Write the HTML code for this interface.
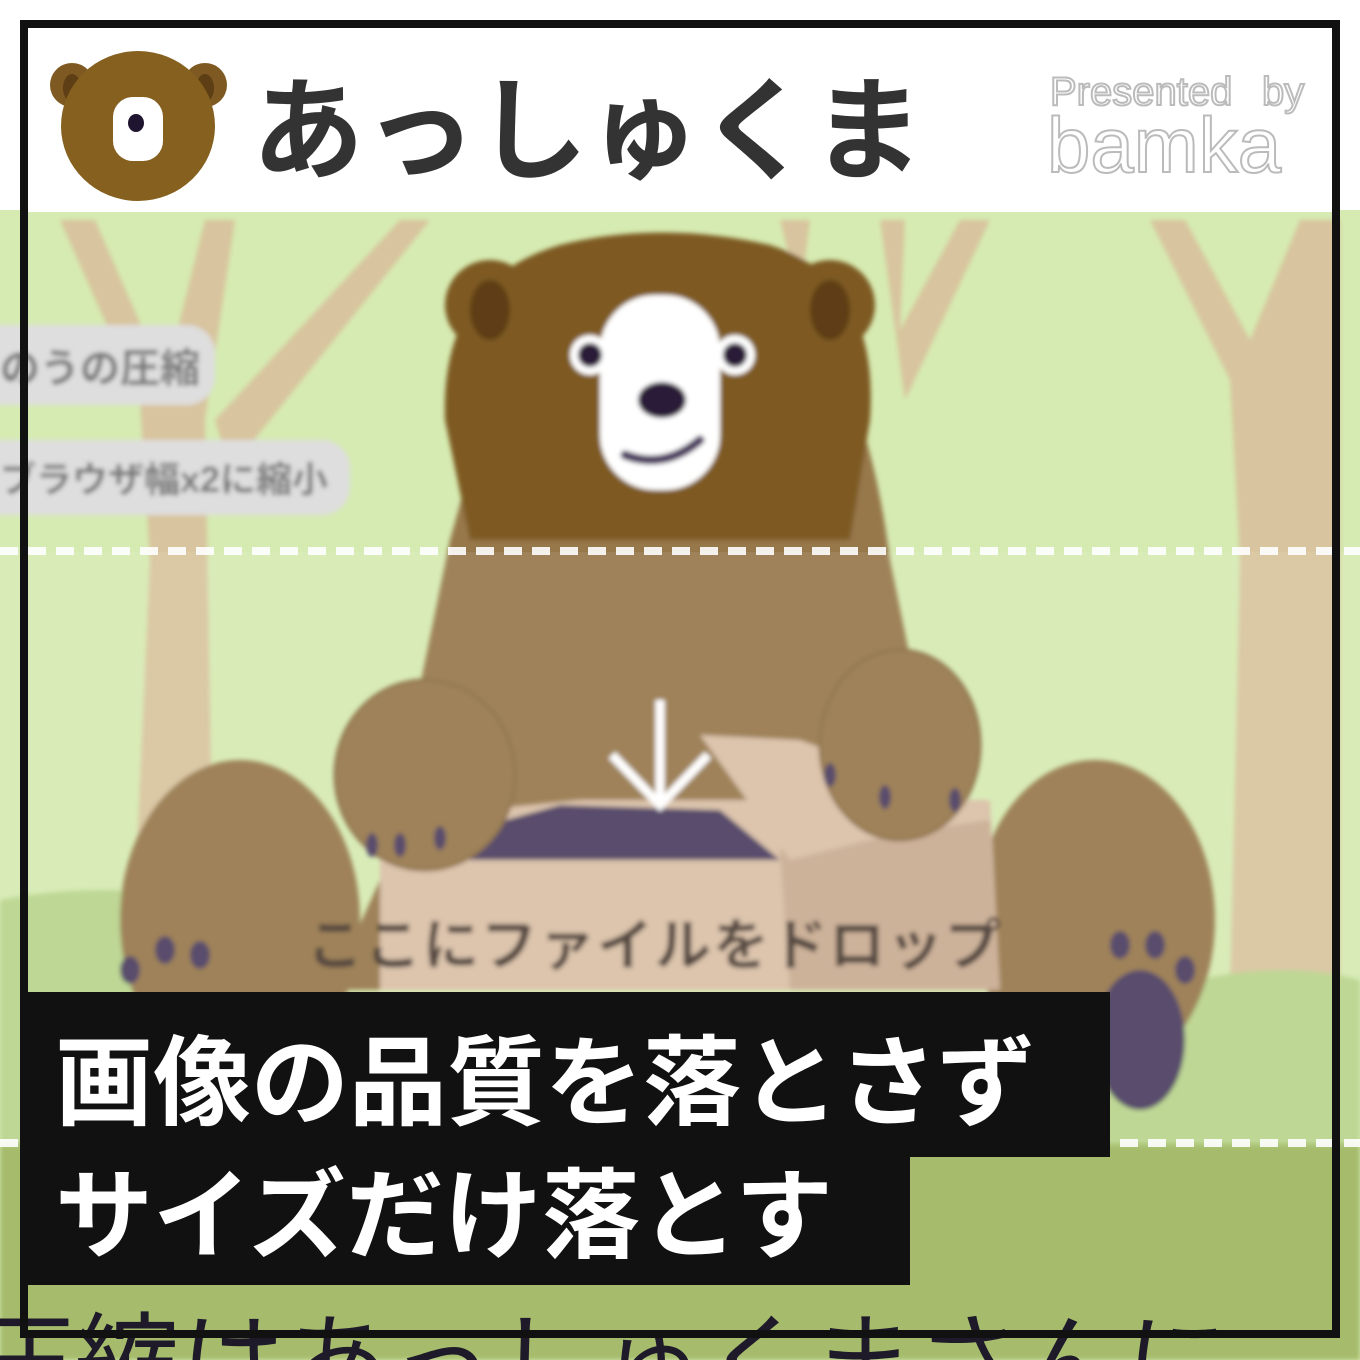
<!DOCTYPE html>
<html><head><meta charset="utf-8"><style>
html,body{margin:0;padding:0;background:#fff;width:1360px;height:1360px;overflow:hidden}
svg{display:block}
.j{font-family:"Liberation Sans","Noto Sans CJK JP",sans-serif;font-weight:bold}
</style></head><body>
<svg width="1360" height="1360" viewBox="0 0 1360 1360" xmlns="http://www.w3.org/2000/svg">
<defs>
<filter id="b" x="-10%" y="-10%" width="120%" height="120%"><feGaussianBlur stdDeviation="2.5"/></filter>
</defs>
<rect x="0" y="210" width="1360" height="1150" fill="#d6ebb2"/>
<g filter="url(#b)">
<path d="M130 1000 L150 560 L140 400 L60 220 L95 220 L165 380 L205 220 L235 220 L205 420 L215 1000 Z" fill="#d8c49e"/>
<path d="M215 420 L400 220 L430 220 L230 470 Z" fill="#d8c49e"/>
<path d="M780 220 L810 220 L800 300 Z" fill="#d8c49e"/>
<path d="M880 220 L905 220 L900 330 L960 220 L990 220 L905 400 Z" fill="#d8c49e"/>
<path d="M1230 1000 L1240 560 L1230 380 L1150 220 L1185 220 L1250 340 L1300 220 L1340 220 L1340 1000 Z" fill="#d8c49e"/>
<path d="M0 900 Q150 870 330 930 L330 1360 L0 1360 Z" fill="#b9d48c"/>
<path d="M1100 1010 Q1250 950 1360 980 L1360 1360 L1100 1360 Z" fill="#b9d48c"/>
<rect x="0" y="1145" width="1360" height="215" fill="#a6bc6c"/>
<path d="M450 540 Q470 470 480 420 L860 420 Q880 480 890 560 L960 900 L1000 990 L330 990 L380 880 Z" fill="#97784c"/>
<ellipse cx="240" cy="920" rx="120" ry="160" fill="#97784c"/>
<ellipse cx="1095" cy="920" rx="120" ry="160" fill="#97784c"/>
<path d="M470 540 L445 420 Q440 280 560 245 Q660 220 770 245 Q880 280 870 420 L850 540 Z" fill="#7e5a22"/>
<circle cx="490" cy="305" r="45" fill="#7e5a22"/>
<circle cx="830" cy="305" r="45" fill="#7e5a22"/>
<ellipse cx="490" cy="310" rx="20" ry="30" fill="#5e3e14"/>
<ellipse cx="830" cy="310" rx="20" ry="30" fill="#5e3e14"/>
<rect x="600" y="295" width="120" height="195" rx="55" fill="#fff"/>
<circle cx="590" cy="355" r="20" fill="#fff"/><circle cx="590" cy="355" r="12" fill="#2a1d38"/>
<circle cx="735" cy="355" r="20" fill="#fff"/><circle cx="735" cy="355" r="12" fill="#2a1d38"/>
<ellipse cx="662" cy="400" rx="24" ry="18" fill="#2a1d38"/>
<path d="M625 455 Q665 470 700 440" stroke="#4b3e60" stroke-width="9" fill="none" stroke-linecap="round"/>
<path d="M380 820 L580 800 L990 800 L1000 990 L380 990 Z" fill="#d9bfa6"/>
<path d="M780 850 L990 820 L1000 990 L790 990 Z" fill="#c9ac92"/>
<path d="M700 735 L800 740 L990 810 L790 860 Z" fill="#d9bfa6"/>
<path d="M470 830 L560 805 L720 810 L780 860 L470 860 Z" fill="#4b3e60"/>
<path d="M660 700 V805 M612 755 L660 805 L708 755" stroke="#fff" stroke-width="9" fill="none"/>
<ellipse cx="425" cy="775" rx="90" ry="95" fill="#97784c" stroke="#8a6c42" stroke-width="3"/>
<ellipse cx="900" cy="745" rx="80" ry="95" fill="#97784c" stroke="#8a6c42" stroke-width="3"/>
<g fill="#4b3e60">
<ellipse cx="372" cy="845" rx="6" ry="12"/><ellipse cx="400" cy="845" rx="6" ry="12"/><ellipse cx="440" cy="838" rx="6" ry="12"/>
<ellipse cx="830" cy="775" rx="6" ry="12"/><ellipse cx="885" cy="797" rx="6" ry="12"/><ellipse cx="955" cy="800" rx="6" ry="12"/>
<ellipse cx="130" cy="970" rx="10" ry="14"/><ellipse cx="165" cy="950" rx="10" ry="14"/><ellipse cx="200" cy="955" rx="10" ry="14"/>
<ellipse cx="1120" cy="945" rx="10" ry="14"/><ellipse cx="1155" cy="945" rx="10" ry="14"/><ellipse cx="1185" cy="970" rx="10" ry="14"/>
<ellipse cx="1140" cy="1040" rx="45" ry="70"/>
</g>
<text x="655" y="965" text-anchor="middle" class="j" font-size="56" fill="#4a3a30" letter-spacing="2">ここにファイルをドロップ</text>
<rect x="-30" y="325" width="245" height="80" rx="28" fill="#dedede"/>
<text x="0" y="382" class="j" font-size="40" fill="#777">のうの圧縮</text>
<rect x="-30" y="440" width="380" height="75" rx="28" fill="#dedede"/>
<text x="0" y="492" class="j" font-size="36" fill="#777">ブラウザ幅x2に縮小</text>
</g>
<rect x="0" y="552" width="1360" height="590" fill="#fff" opacity="0.08"/>
<line x1="0" y1="551" x2="1360" y2="551" stroke="#fff" stroke-width="8" stroke-dasharray="18 10" opacity="0.9"/>
<line x1="0" y1="1143" x2="1360" y2="1143" stroke="#fff" stroke-width="8" stroke-dasharray="18 10" opacity="0.9"/>
<text x="-30" y="1400" font-family="Liberation Sans,'Noto Sans CJK JP',sans-serif" font-size="105" fill="#1e1a2a">圧縮はあっしゅくまさんに</text>
<rect x="24" y="24" width="1312" height="188" fill="#fff"/>
<rect x="24" y="24" width="1312" height="1310" fill="none" stroke="#111" stroke-width="8"/>
<circle cx="72" cy="85" r="22" fill="#7e5a22"/><circle cx="205" cy="85" r="22" fill="#7e5a22"/>
<ellipse cx="72" cy="88" rx="9" ry="14" fill="#5e3e14"/><ellipse cx="205" cy="88" rx="9" ry="14" fill="#5e3e14"/>
<ellipse cx="138" cy="126" rx="77" ry="75" fill="#85601f"/>
<rect x="113" y="97" width="50" height="64" rx="20" fill="#fff"/>
<ellipse cx="136" cy="123" rx="8" ry="9" fill="#201530"/>
<text x="252" y="170" class="j" font-size="112" fill="#333">あっしゅくま</text>
<text x="1050" y="105" font-family="Liberation Sans,sans-serif" font-size="40" fill="#fff" stroke="#bbb" stroke-width="2">Presented</text>
<text x="1262" y="105" font-family="Liberation Sans,sans-serif" font-size="40" fill="#fff" stroke="#bbb" stroke-width="2">by</text>
<text x="1047" y="172" font-family="Liberation Sans,sans-serif" font-size="78" fill="#fff" stroke="#bbb" stroke-width="2">bamka</text>
<rect x="28" y="992" width="1082" height="165" fill="#111"/>
<rect x="28" y="1155" width="882" height="130" fill="#111"/>
<text x="55" y="1117" class="j" font-size="98" fill="#fff">画像の品質を落とさず</text>
<text x="55" y="1250" class="j" font-size="98" fill="#fff">サイズだけ落とす</text>
</svg>
</body></html>
